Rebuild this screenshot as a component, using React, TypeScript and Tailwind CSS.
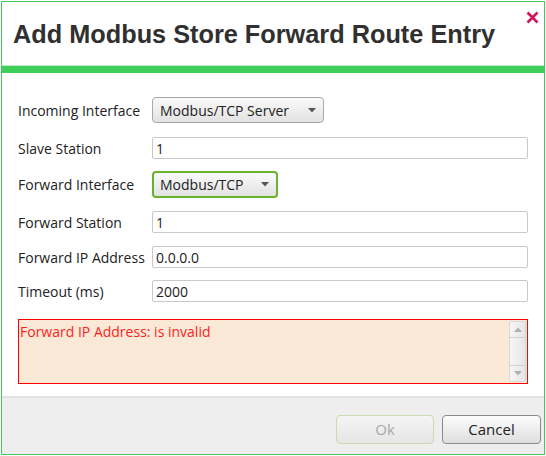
import React from "react";

const labelFont = { fontFamily: '"Open Sans", "Noto Sans", sans-serif' };

function Label({ children }: { children: React.ReactNode }) {
  return <div className="w-[134px] shrink-0 text-[14px] text-[#222]">{children}</div>;
}

function TextBox({ value }: { value: string }) {
  return (
    <div className="flex h-[22px] flex-1 items-center rounded-[2px] border border-[#c8c8c8] bg-white px-[3px] text-[14px] text-[#222]">
      {value}
    </div>
  );
}

function Arrow() {
  return (
    <svg width="8" height="5" viewBox="0 0 8 5" className="ml-auto">
      <path d="M0 0 L8 0 L4 4.5 Z" fill="#555" />
    </svg>
  );
}

export default function App() {
  return (
    <div className="h-[456px] w-[546px] bg-white p-[1px]" style={labelFont}>
      <div className="flex h-[454px] w-[544px] flex-col border border-[#45c85c] bg-white">
        {/* Header */}
        <div className="relative flex h-[64px] items-end border-b border-[#c5e8cb] px-[11px] pb-[18px]">
          <h1
            className="text-[25.3px] font-bold leading-none text-[#303030]"
            style={{ fontFamily: '"Liberation Sans", Arial, sans-serif' }}
          >
            Add Modbus Store Forward Route Entry
          </h1>
          <svg
            width="13"
            height="13"
            viewBox="0 0 13 13"
            className="absolute right-[5px] top-[9px]"
          >
            <path d="M1.5 1.5 L11.5 11.5 M11.5 1.5 L1.5 11.5" stroke="#d0155a" strokeWidth="2.6" />
          </svg>
        </div>
        <div className="h-[7px] bg-[#3ecf5a]" />

        {/* Form */}
        <div className="flex flex-1 flex-col px-[16px] pt-[24px]">
          <div className="flex h-[26px] items-center">
            <Label>Incoming Interface</Label>
            <div className="flex h-[26px] w-[172px] items-center rounded-[4px] border border-[#a8a8a8] bg-gradient-to-b from-[#fafafa] to-[#e2e2e2] pl-[7px] pr-[7px] text-[14px] text-[#222]">
              Modbus/TCP Server
              <Arrow />
            </div>
          </div>
          <div className="mt-[14px] flex items-center">
            <Label>Slave Station</Label>
            <TextBox value="1" />
          </div>
          <div className="mt-[12px] flex h-[27px] items-center">
            <Label>Forward Interface</Label>
            <div className="flex h-[27px] w-[126px] items-center rounded-[4px] border-2 border-[#6ab12c] bg-gradient-to-b from-[#fafafa] to-[#e2e2e2] pl-[6px] pr-[7px] text-[14px] text-[#222]">
              Modbus/TCP
              <Arrow />
            </div>
          </div>
          <div className="mt-[13px] flex items-center">
            <Label>Forward Station</Label>
            <TextBox value="1" />
          </div>
          <div className="mt-[13px] flex items-center">
            <Label>Forward IP Address</Label>
            <TextBox value="0.0.0.0" />
          </div>
          <div className="mt-[12px] flex items-center">
            <Label>Timeout (ms)</Label>
            <TextBox value="2000" />
          </div>

          {/* Error box */}
          <div className="mt-[17px] flex h-[65px] border border-[#ff0000] bg-[#f9e9d6]">
            <div className="flex-1 pl-[1px] pt-[1px] text-[14px] text-[#ff1e1e]">
              Forward IP Address: is invalid
            </div>
            <div className="my-[1px] mr-[1px] flex w-[17px] flex-col rounded-[2px] border border-[#d8d8d8] bg-gradient-to-r from-[#f6f6f6] to-[#e6e6e6]">
              <div className="flex h-[16px] items-center justify-center border-b border-[#d0d0d0]">
                <svg width="8" height="5" viewBox="0 0 8 5">
                  <path d="M0 5 L8 5 L4 0.5 Z" fill="#b0b0b0" />
                </svg>
              </div>
              <div className="flex-1" />
              <div className="flex h-[16px] items-center justify-center border-t border-[#d0d0d0]">
                <svg width="8" height="5" viewBox="0 0 8 5">
                  <path d="M0 0 L8 0 L4 4.5 Z" fill="#b0b0b0" />
                </svg>
              </div>
            </div>
          </div>
        </div>

        {/* Footer */}
        <div className="flex h-[58px] items-start justify-end gap-[8px] border-t-2 border-[#e2e2e2] bg-[#eeeeee] pr-[3px] pt-[17px]">
          <button className="h-[29px] w-[98px] rounded-[4px] border border-[#c9dcae] bg-gradient-to-b from-[#f4f4f4] to-[#e6e6e6] text-[15px] text-[#a8a8a8]">
            Ok
          </button>
          <button className="h-[29px] w-[99px] rounded-[4px] border border-[#8a8a8a] bg-gradient-to-b from-[#fdfdfd] to-[#dedede] text-[15px] text-[#222]">
            Cancel
          </button>
        </div>
      </div>
    </div>
  );
}
